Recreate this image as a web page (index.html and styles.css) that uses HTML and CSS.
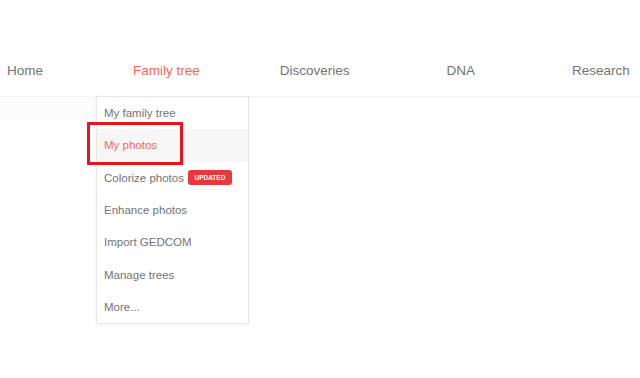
FILE: index.html
```html
<!DOCTYPE html>
<html>
<head>
<meta charset="utf-8">
<link rel="stylesheet" href="styles.css">
</head>
<body>
<header class="header">
  <nav class="nav">
    <a class="nav-item home">Home</a>
    <a class="nav-item family active">Family tree</a>
    <a class="nav-item disc">Discoveries</a>
    <a class="nav-item dna">DNA</a>
    <a class="nav-item research">Research</a>
  </nav>
</header>
<div class="below">
  <div class="band"></div>
  <ul class="dropdown">
    <li class="dd-item">My family tree</li>
    <li class="dd-item hover">My photos</li>
    <li class="dd-item">Colorize photos <span class="badge">UPDATED</span></li>
    <li class="dd-item">Enhance photos</li>
    <li class="dd-item">Import GEDCOM</li>
    <li class="dd-item">Manage trees</li>
    <li class="dd-item">More...</li>
  </ul>
  <div class="highlight-box"></div>
</div>
</body>
</html>
```

FILE: styles.css
```css
* { box-sizing: border-box; }
html, body { margin: 0; padding: 0; background: #fff; }
body {
  font-family: "Liberation Sans", Arial, sans-serif;
  width: 640px;
  height: 378px;
  overflow: hidden;
  position: relative;
}
.header {
  height: 97px;
  border-bottom: 1px solid #f2f2f2;
  box-shadow: 0 1px 2px rgba(0,0,0,0.025);
  display: flex;
  align-items: flex-start;
}
.nav {
  display: flex;
  padding-top: 63px;
  padding-left: 7px;
  font-size: 13.5px;
  line-height: 16px;
}
.nav-item { color: #737373; white-space: nowrap; }
.nav-item.active { color: #f4694f; }
.family { margin-left: 90px; }
.disc { margin-left: 80px; }
.dna { margin-left: 97px; }
.research { margin-left: 97px; }

.below { position: relative; }
.band {
  width: 96px;
  height: 23px;
  background: #fbfbfb;
}
.dropdown {
  position: absolute;
  left: 96px;
  top: -1px;
  width: 153px;
  margin: 0;
  padding: 0;
  list-style: none;
  background: #fff;
  border: 1px solid #e8e8e8;
  box-shadow: 0 1px 4px rgba(0,0,0,0.05);
}
.dd-item {
  height: 32.3px;
  display: flex;
  align-items: center;
  padding-left: 7px;
  font-size: 11.5px;
  color: #737373;
  white-space: nowrap;
}
.dd-item.hover { background: #f6f6f6; color: #f4694f; }
.badge {
  display: inline-flex;
  align-items: center;
  justify-content: center;
  margin-left: 4px;
  width: 44px;
  height: 15px;
  border-radius: 3px;
  background: #e8393a;
  color: #fff;
  font-size: 6.5px;
  font-weight: bold;
}
.highlight-box {
  position: absolute;
  left: 87px;
  top: 25px;
  width: 96px;
  height: 43px;
  border: 3px solid #e8141b;
}
```
